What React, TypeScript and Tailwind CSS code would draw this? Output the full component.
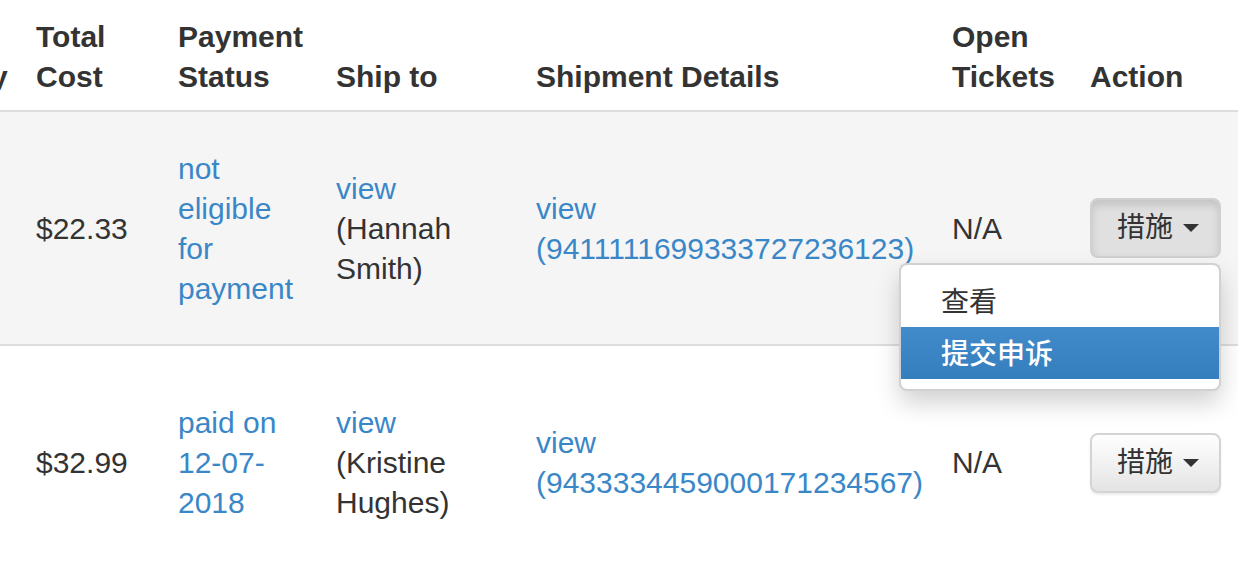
import React from "react";

const font = { fontFamily: "'Liberation Sans', Arial, 'Noto Sans CJK SC', sans-serif" };

function Caret() {
  return <span className="inline-block w-0 h-0 border-t-[8px] border-t-[#333] border-x-[8px] border-x-transparent ml-[10px] align-middle" />;
}

function ActionButton({ open }: { open?: boolean }) {
  return (
    <div className="relative inline-block">
      <button
        className={
          "flex items-center h-[60px] w-[131px] pl-[25px] rounded-[8px] border-2 text-[28px] leading-[40px] text-[#333] " +
          (open
            ? "bg-[#e0e0e0] border-[#d0d0d0] shadow-[inset_0_5px_9px_rgba(0,0,0,0.13)]"
            : "bg-gradient-to-b from-white to-[#e4e4e4] border-[#d4d4d4] shadow-[0_2px_2px_rgba(0,0,0,0.075)]")
        }
      >
        <span>措施</span>
        <Caret />
      </button>
      {open && (
        <div className="absolute right-0 top-full mt-[5px] z-10 w-[322px] bg-white border-2 border-[rgba(0,0,0,0.18)] rounded-[8px] py-[10px] shadow-[0_12px_24px_rgba(0,0,0,0.18)] text-[28px] leading-[40px]">
          <div className="px-[40px] pt-[8px] pb-[4px] text-[#333]">查看</div>
          <div className="px-[40px] pt-[8px] pb-[4px] text-white font-medium bg-gradient-to-b from-[#428bca] to-[#357ebd]">提交申诉</div>
        </div>
      )}
    </div>
  );
}

const link = "text-[#3a87c8]";
const td = "px-[16px] pt-[1px] align-middle";

export default function App() {
  return (
    <div className="w-[1238px] h-[578px] overflow-hidden bg-white text-[#333] text-[30px] leading-[40px]" style={font}>
      <table className="table-fixed border-collapse ml-[-130px] w-[1368px]">
        <colgroup>
          <col className="w-[150px]" />
          <col className="w-[142px]" />
          <col className="w-[158px]" />
          <col className="w-[200px]" />
          <col className="w-[416px]" />
          <col className="w-[138px]" />
          <col className="w-[164px]" />
        </colgroup>
        <thead>
          <tr className="border-b-2 border-[#ddd]">
            {["Quantity", "Total Cost", "Payment Status", "Ship to", "Shipment Details", "Open Tickets", "Action"].map((h) => (
              <th key={h} className="text-left align-bottom font-bold px-[16px] pt-[17px] pb-[13px]">
                {h}
              </th>
            ))}
          </tr>
        </thead>
        <tbody>
          <tr className="bg-[#f5f5f5]">
            <td className={"h-[234px] " + td}></td>
            <td className={td}>$22.33</td>
            <td className={td}>
              <a className={link}>not eligible for payment</a>
            </td>
            <td className={td}>
              <a className={"block " + link}>view</a>
              <span>(Hannah Smith)</span>
            </td>
            <td className={td + " whitespace-nowrap"}>
              <a className={"block " + link}>view</a>
              <a className={"block " + link}>(94111116993337272361​23)</a>
            </td>
            <td className={td}>N/A</td>
            <td className="pl-[16px] align-middle">
              <ActionButton open />
            </td>
          </tr>
          <tr className="border-t-2 border-[#ddd]">
            <td className={"h-[234px] " + td}></td>
            <td className={td}>$32.99</td>
            <td className={td}>
              <a className={link}>paid on 12-07-2018</a>
            </td>
            <td className={td}>
              <a className={"block " + link}>view</a>
              <span>(Kristine Hughes)</span>
            </td>
            <td className={td + " whitespace-nowrap"}>
              <a className={"block " + link}>view</a>
              <a className={"block " + link}>(9433334459000171234567)</a>
            </td>
            <td className={td}>N/A</td>
            <td className="pl-[16px] align-middle">
              <ActionButton />
            </td>
          </tr>
        </tbody>
      </table>
    </div>
  );
}
